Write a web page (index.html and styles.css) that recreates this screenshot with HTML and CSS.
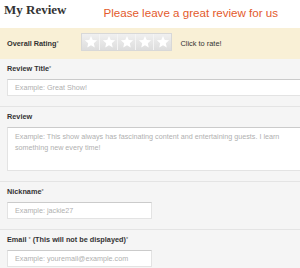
FILE: index.html
```html
<!DOCTYPE html>
<html>
<head>
    <title>My Review</title>
    <meta name="viewport" content="width=device-width, initial-scale=1">
    <link rel="stylesheet" href="styles.css">
</head>
<body>
    <div class="review-form">
        <div class="form-header">
            <h2 class="form-title">My Review</h2>
            <p class="form-tagline">Please leave a great review for us</p>
        </div>

        <div class="rating-row">
            <span class="field-label rating-label">Overall Rating<span class="req">*</span></span>
            <div class="stars">
                <span class="star"><svg viewBox="0 0 24 24"><polygon points="12,1.5 15,8.4 22.5,9.1 16.8,14.1 18.5,21.5 12,17.6 5.5,21.5 7.2,14.1 1.5,9.1 9,8.4"/></svg></span>
                <span class="star"><svg viewBox="0 0 24 24"><polygon points="12,1.5 15,8.4 22.5,9.1 16.8,14.1 18.5,21.5 12,17.6 5.5,21.5 7.2,14.1 1.5,9.1 9,8.4"/></svg></span>
                <span class="star"><svg viewBox="0 0 24 24"><polygon points="12,1.5 15,8.4 22.5,9.1 16.8,14.1 18.5,21.5 12,17.6 5.5,21.5 7.2,14.1 1.5,9.1 9,8.4"/></svg></span>
                <span class="star"><svg viewBox="0 0 24 24"><polygon points="12,1.5 15,8.4 22.5,9.1 16.8,14.1 18.5,21.5 12,17.6 5.5,21.5 7.2,14.1 1.5,9.1 9,8.4"/></svg></span>
                <span class="star"><svg viewBox="0 0 24 24"><polygon points="12,1.5 15,8.4 22.5,9.1 16.8,14.1 18.5,21.5 12,17.6 5.5,21.5 7.2,14.1 1.5,9.1 9,8.4"/></svg></span>
            </div>
            <span class="rate-hint">Click to rate!</span>
        </div>

        <div class="field">
            <label class="field-label" for="reviewTitle">Review Title<span class="req">*</span></label>
            <input class="field-input wide" id="reviewTitle" type="text" placeholder="Example: Great Show!">
        </div>

        <div class="field">
            <label class="field-label" for="reviewText">Review</label>
            <textarea class="field-input field-area wide" id="reviewText" placeholder="Example: This show always has fascinating content and entertaining guests. I learn&#10;something new every time!"></textarea>
        </div>

        <div class="field">
            <label class="field-label" for="nickname">Nickname<span class="req">*</span></label>
            <input class="field-input short" id="nickname" type="text" placeholder="Example: jackie27">
        </div>

        <div class="field">
            <label class="field-label" for="email">Email <span class="req">*</span> (This will not be displayed)<span class="req">*</span></label>
            <input class="field-input short" id="email" type="text" placeholder="Example: youremail@example.com">
        </div>
    </div>
</body>
</html>
```

FILE: styles.css
```css
body {
    margin: 0;
    font-family: "Liberation Sans", Arial, sans-serif;
    background-color: #f5f5f5;
    color: #333;
    overflow: hidden;
}

.review-form {
    width: 300px;
}

.form-header {
    display: flex;
    align-items: flex-start;
    height: 28px;
    padding-left: 4px;
    background-color: #fff;
}

.form-title {
    margin: 0;
    padding-top: 1.5px;
    font-family: "Liberation Serif", "Times New Roman", serif;
    font-size: 13px;
    line-height: 15px;
    font-weight: bold;
    color: #333;
}

.form-tagline {
    margin: 6.3px 0 0 37px;
    font-size: 11.6px;
    line-height: 14px;
    color: #e35a2c;
}

.rating-row {
    display: flex;
    align-items: center;
    height: 31px;
    padding-left: 7px;
    background-color: #f9f0d6;
}

.rating-label {
    width: 74px;
}

.stars {
    display: flex;
    margin-bottom: 4px;
    border: 1px solid #d8d8d8;
    background: linear-gradient(#f0f0f0, #dddddd);
}

.star {
    display: flex;
    align-items: center;
    justify-content: center;
    width: 17px;
    height: 16px;
    border-right: 1px solid #f4f4f4;
}

.star:last-child {
    border-right: none;
}

.star svg {
    width: 14px;
    height: 14px;
    fill: #fff;
}

.rate-hint {
    margin-left: 8.5px;
    font-size: 7.4px;
    color: #333;
}

.field {
    padding: 5px 0 10px 7px;
    border-bottom: 1px solid #e4e4e4;
}

.field-label {
    display: block;
    margin-bottom: 5px;
    font-size: 7.3px;
    line-height: 10px;
    font-weight: bold;
    color: #333;
}

.rating-label {
    margin-bottom: 0;
}

.req {
    font-size: 5.5px;
    font-weight: normal;
    color: #555;
    vertical-align: top;
    line-height: 8px;
}

.field-input {
    display: block;
    box-sizing: border-box;
    height: 17px;
    margin: 0;
    padding: 0 7px;
    font-family: "Liberation Sans", Arial, sans-serif;
    font-size: 7.2px;
    color: #333;
    background-color: #fff;
    border: 1px solid #e3e3e3;
    border-top-color: #cbcbcb;
    border-radius: 0;
    outline: none;
}

.field-input::placeholder {
    color: #b0b0b0;
}

.field-area {
    height: 44px;
    padding: 3px 7px;
    line-height: 11px;
    resize: none;
    overflow: hidden;
}

.wide {
    width: 100%;
    border-right-width: 0;
}

.short {
    width: 145px;
}
```
